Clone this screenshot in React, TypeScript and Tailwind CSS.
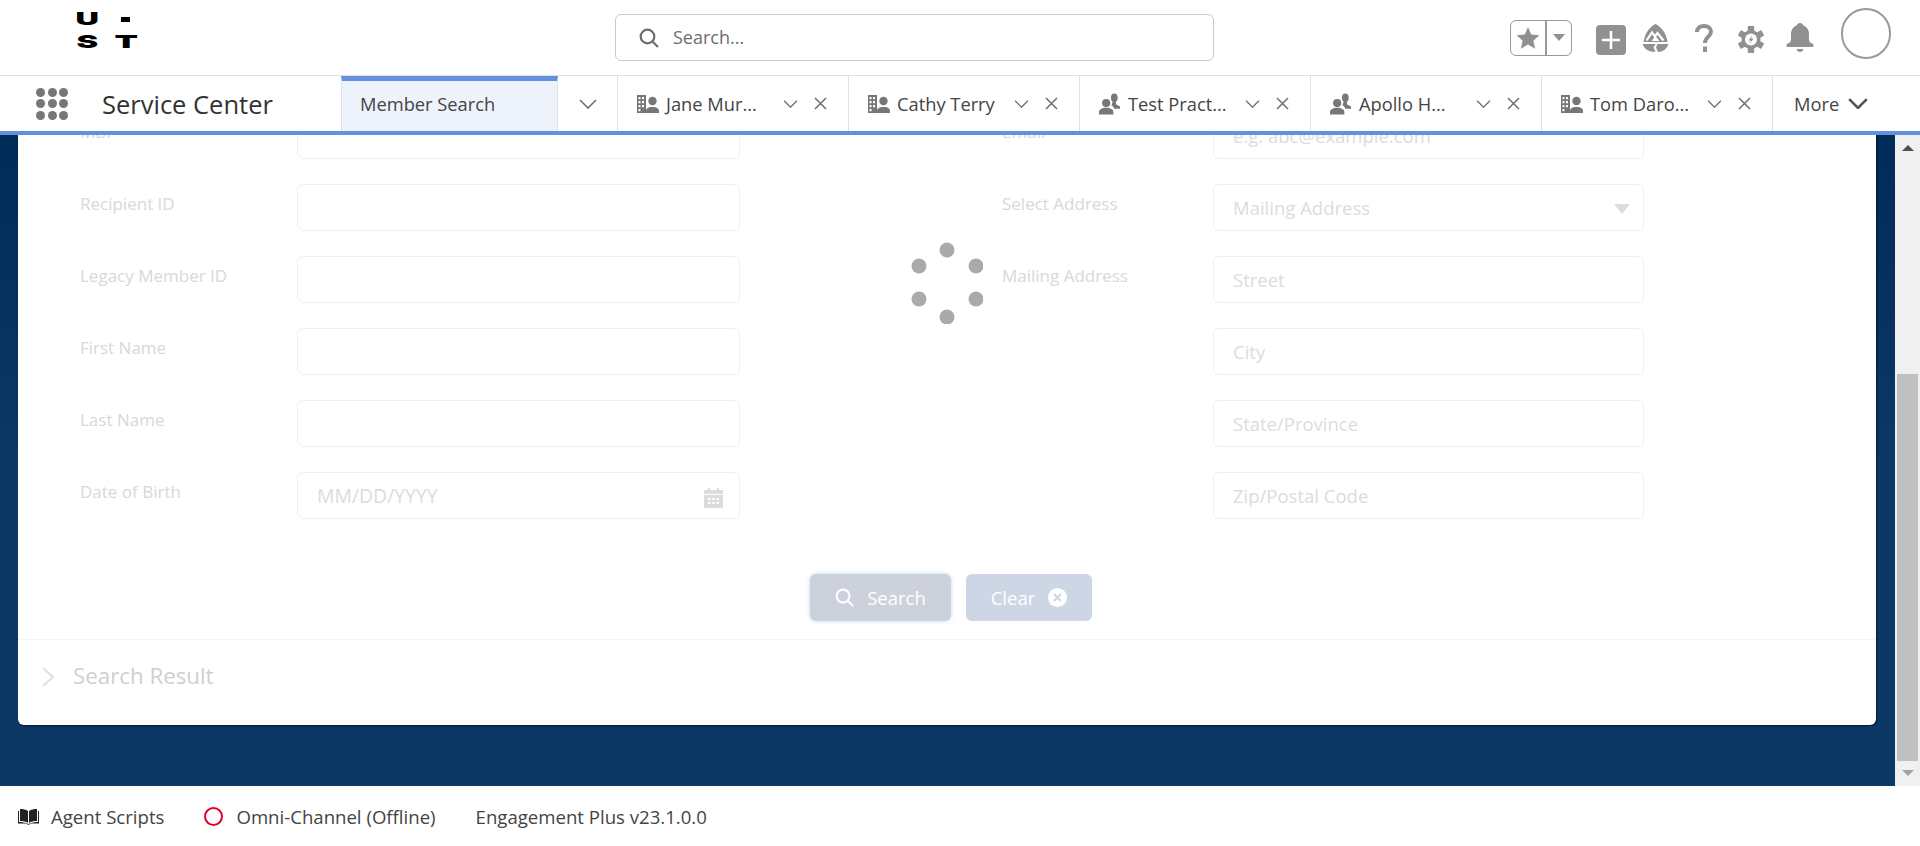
import React from "react";

const leftFields = ["MBI", "Recipient ID", "Legacy Member ID", "First Name", "Last Name", "Date of Birth"];
const rightFields = [
  { label: "Email", value: "e.g. abc@example.com" },
  { label: "Select Address", value: "Mailing Address" },
  { label: "Mailing Address", value: "Street" },
  { label: "", value: "City" },
  { label: "", value: "State/Province" },
  { label: "", value: "Zip/Postal Code" },
];
const tabs = [
  { name: "Jane Mur...", icon: "account" },
  { name: "Cathy Terry", icon: "account" },
  { name: "Test Pract...", icon: "contact" },
  { name: "Apollo H...", icon: "contact" },
  { name: "Tom Daro...", icon: "account" },
];

function Chevron({ className }: { className: string }) {
  return (
    <svg viewBox="0 0 18 10" fill="none" stroke="currentColor" strokeWidth="1.6" className={className}>
      <path d="M1 1l8 8 8-8" />
    </svg>
  );
}

function AccountIcon() {
  return (
    <svg viewBox="0 0 22 18" className="w-[22px] h-[18px] text-[#777]" fill="currentColor">
      <path
        fillRule="evenodd"
        d="M0 0h9v18H0zM1.5 2v2.2h2V2zM5 2v2.2h2V2zM1.5 6v2.2h2V6zM5 6v2.2h2V6zM1.5 10v2.2h2V10zM5 10v2.2h2V10zM1.5 14v2.2h2V14z"
      />
      <circle cx="15.5" cy="6" r="4.2" />
      <path d="M9 18v-2.4c0-2.2 2.6-3 4.2-3.6h4.6c1.6.6 4.2 1.4 4.2 3.6V18z" />
    </svg>
  );
}

function ContactIcon() {
  return (
    <svg viewBox="0 0 23 22" className="w-[23px] h-[22px] text-[#777]" fill="currentColor">
      <ellipse cx="16" cy="4.500" rx="3.500" ry="4.500" />
      <path d="M14.500 8h3l.5 3.500 4 2V16h-6c-.5-2-2-3-3-3.600z" />
      <circle cx="7.500" cy="10" r="4.300" />
      <path d="M0 22v-3c0-2 2.600-3 5-4h5c2.400 1 5 2 5 4v3z" />
    </svg>
  );
}

function SearchIcon({ className }: { className: string }) {
  return (
    <svg viewBox="0 0 20 20" fill="none" stroke="currentColor" strokeWidth="2.200" className={className}>
      <circle cx="8.500" cy="8.500" r="6.800" />
      <path d="M13.500 13.500l5.500 5.500" />
    </svg>
  );
}

function Gear() {
  const teeth = [0, 60, 120, 180, 240, 300];
  return (
    <svg viewBox="0 0 26 27" className="w-[26px] h-[27px] ml-[25px] mt-[3px] text-[#919191]" fill="currentColor">
      <g transform="translate(13 13.500)">
        {teeth.map((a) => (
          <rect key={a} x="-3.200" y="-13.500" width="6.400" height="7" rx="1" transform={`rotate(${a})`} />
        ))}
        <circle r="9.500" />
        <circle r="6" fill="#fff" />
        <path d="M1.500-4.500L-2.500 1h2.500L-1.500 4.500 2.500-1H0z" />
      </g>
    </svg>
  );
}

function Header() {
  return (
    <header className="h-[76px] shrink-0 flex items-center bg-white border-b border-[#e0e0e0]">
      <div className="ml-[68px] w-[77px] grid grid-cols-2 grid-rows-2 h-[46px] -mt-[14px] font-['Inter',sans-serif] font-black text-[18px] leading-none text-black">
        <span className="flex items-center justify-center scale-x-[1.8]">U</span>
        <span className="flex items-center justify-center">
          <span className="w-[9px] h-[5px] bg-black" />
        </span>
        <span className="flex items-center justify-center scale-x-[1.8]">S</span>
        <span className="flex items-center justify-center scale-x-[1.9]">T</span>
      </div>

      <div className="ml-[470px] w-[599px] h-[47px] flex items-center border border-[#c9c9c9] rounded-md pl-[23px]">
        <SearchIcon className="w-[20px] h-[20px] text-[#706e6b]" />
        <span className="ml-[14px] text-[18px] text-[#706e6b]">Search...</span>
      </div>

      <div className="ml-[296px] w-[62px] h-[36px] flex items-center border border-[#999] rounded-md">
        <div className="w-[36px] h-full flex items-center justify-center border-r-2 border-[#999]">
          <svg viewBox="0 0 24 24" className="w-[24px] h-[24px] text-[#919191]" fill="currentColor">
            <path d="M12 1l3.300 7.600 8.200.7-6.200 5.400 1.900 8L12 18.500l-7.200 4.200 1.900-8L.5 9.300l8.200-.7z" />
          </svg>
        </div>
        <div className="flex-1 flex items-center justify-center">
          <span className="w-0 h-0 border-x-[6.500px] border-x-transparent border-t-[7px] border-t-[#919191]" />
        </div>
      </div>
      <div className="ml-[24px] mt-[4px] w-[30px] h-[30px] rounded bg-[#919191] flex items-center justify-center">
        <svg viewBox="0 0 18 18" className="w-[18px] h-[18px]" stroke="#fff" strokeWidth="2.600">
          <path d="M9 0v18M0 9h18" />
        </svg>
      </div>
      <svg viewBox="0 0 27 28" className="ml-[16px] w-[27px] h-[28px] text-[#919191]" fill="currentColor">
        <path d="M13.500 0C8.500 2.500 3 8 1.500 18h24C24 8 18.500 2.500 13.500 0z" />
        <path d="M.5 20h13l-2 3.500 2 4.500C7 28 2 25 .5 20zM15.500 20h11c-1.500 5-6 8-10.500 8l-2-4.500z" />
        <path d="M4.500 16.500l5.500-8 3 4 2.500-3.500 6 7.500" fill="none" stroke="#fff" strokeWidth="2.200" />
        <path d="M9.500 17l4-5 4 5z" fill="#fff" />
      </svg>
      <svg viewBox="0 0 18 28" className="ml-[26px] w-[18px] h-[28px] text-[#919191]" fill="none" stroke="currentColor" strokeWidth="4">
        <path d="M2 8C2 4 5 2 9 2s7 2.200 7 5.500c0 5-6 5.400-6 11.500" />
        <path d="M10 22.500V28" />
      </svg>
      <Gear />
      <svg viewBox="0 0 28 29" className="ml-[22px] w-[28px] h-[29px] text-[#919191]" fill="currentColor">
        <path d="M14 0c2 0 3 1 3.300 2.500C21 3.800 23 7 23 11v6c0 2 2 3 4 4 1 .5 1 3-.5 3h-25C0 24 0 21.500 1 21c2-1 4-2 4-4v-6c0-4 2-7.200 5.700-8.500C11 1 12 0 14 0z" />
        <path d="M10.500 26h7c-.5 2-2 3-3.500 3s-3-1-3.500-3z" />
      </svg>
      <div className="ml-[27px] -mt-[8px] w-[50px] h-[51px] rounded-full border-2 border-[#999]" />
    </header>
  );
}

function TabBar() {
  return (
    <nav className="h-[59px] shrink-0 flex bg-white border-b-4 border-[#6391dd] text-[18.3px] text-[#444]">
      <div className="ml-[36px] my-auto grid grid-cols-3 gap-[2.500px]">
        {Array.from({ length: 9 }).map((_, i) => (
          <span key={i} className="w-[9px] h-[9px] rounded-full bg-[#777]" />
        ))}
      </div>
      <div className="ml-[34px] w-[239px] my-auto pt-[1px] text-[25.5px] text-[#333]">Service Center</div>
      <div className="w-[217px] flex items-center pl-[18px] pb-[5px] bg-[#eef2fb] border-x border-[#dde0e8] border-t-[5px] border-t-[#6391dd]">
        Member Search
      </div>
      <div className="w-[60px] flex items-center pl-[21px] border-r border-[#e0e0e0]">
        <Chevron className="w-[18px] h-[10px] text-[#706e6b]" />
      </div>
      {tabs.map((t) => (
        <div key={t.name} className="w-[231px] flex items-center pl-[19px] border-r border-[#e0e0e0]">
          <span className="w-[22px] flex justify-center">{t.icon === "account" ? <AccountIcon /> : <ContactIcon />}</span>
          <span className="ml-[7px] w-[117px] whitespace-nowrap">{t.name}</span>
          <Chevron className="w-[15px] h-[8px] text-[#706e6b]" />
          <svg viewBox="0 0 13 13" stroke="#706e6b" strokeWidth="1.500" className="ml-[16px] w-[13px] h-[13px]">
            <path d="M1 1l11 11M12 1L1 12" />
          </svg>
        </div>
      ))}
      <div className="flex items-center pl-[21px]">
        More
        <Chevron className="ml-[9px] w-[20px] h-[11px] text-[#555] stroke-[2.4]" />
      </div>
    </nav>
  );
}

function Field({ value, narrow, big }: { value?: string; narrow?: boolean; big?: boolean }) {
  return (
    <div
      className={`h-[47px] flex items-center px-[19px] pt-[1px] border border-[#efefef] rounded-md text-[#dcdcdc] ${
        narrow ? "w-[431px]" : "w-[443px]"
      } ${big ? "text-[19.4px]" : "text-[18.5px]"}`}
    >
      <span className="flex-1 whitespace-nowrap">{value}</span>
    </div>
  );
}

function SearchForm() {
  return (
    <div className="ml-[18px] -mt-[80px] w-[1858px] bg-white rounded-md shadow-[1px_1px_2px_rgba(0,0,0,0.55)]">
      <div className="pt-[57px] pl-[62px] flex">
        <div className="flex flex-col gap-[25px]">
          {leftFields.map((f) => (
            <div key={f} className="flex">
              <div className="w-[217px] pt-[6px] text-[17px] leading-[28px] text-[#d8d8d8]">{f}</div>
              {f === "Date of Birth" ? (
                <div className="relative">
                  <Field value="MM/DD/YYYY" big />
                  <svg viewBox="0 0 19 20" className="absolute right-[17px] top-[16px] w-[19px] h-[20px]" fill="#dcdcdc">
                    <path d="M4 0h2v2h7V0h2v2h4v4H0V2h4z" />
                    <path fillRule="evenodd" d="M0 7h19v13H0zM4 10v2h2.500v-2zM8.200 10v2h2.500v-2zM12.500 10v2H15v-2zM4 14v2h2.500v-2zM8.200 14v2h2.500v-2zM12.500 14v2H15v-2z" />
                  </svg>
                </div>
              ) : (
                <Field />
              )}
            </div>
          ))}
        </div>
        <div className="ml-[262px] flex flex-col gap-[25px]">
          {rightFields.map((f) => (
            <div key={f.value} className="flex">
              <div className="w-[211px] pt-[6px] text-[17px] leading-[28px] text-[#d8d8d8]">{f.label}</div>
              <div className="relative">
                <Field value={f.value} narrow />
                {f.value === "Mailing Address" && (
                  <span className="absolute right-[14px] top-[20px] w-0 h-0 border-x-[8px] border-x-transparent border-t-[10px] border-t-[#dcdcdc]" />
                )}
              </div>
            </div>
          ))}
        </div>
      </div>

      <div className="mt-[55px] mb-[18px] pl-[8px] flex justify-center gap-[15px] text-[18.5px] text-white">
        <button className="w-[141px] h-[47px] flex items-center justify-center gap-[13px] rounded-md bg-[#cdd1dc] shadow-[0_0_4px_#bcd8f8]">
          <SearchIcon className="w-[19px] h-[19px]" />
          Search
        </button>
        <button className="w-[126px] h-[47px] flex items-center justify-center gap-[13px] rounded-md bg-[#cdd6e5]">
          Clear
          <svg viewBox="0 0 19 19" className="w-[19px] h-[19px]">
            <circle cx="9.500" cy="9.500" r="9.500" fill="#fff" />
            <path d="M6 6l7 7M13 6l-7 7" stroke="#cdd6e5" strokeWidth="2" />
          </svg>
        </button>
      </div>

      <div className="h-[86px] flex items-center pl-[24px] pb-[13px] border-t border-[#f5f5f5] text-[22.3px] text-[#cfcfcf]">
        <svg viewBox="0 0 13 20" fill="none" stroke="#dfdfdf" strokeWidth="2" className="w-[13px] h-[20px] mt-[2px]">
          <path d="M1 1l10 9-10 9" />
        </svg>
        <span className="ml-[18px]">Search Result</span>
      </div>
    </div>
  );
}

function Scrollbar() {
  return (
    <div className="w-[25px] shrink-0 flex flex-col items-center bg-[#f0f0f0]">
      <span className="mt-[10px] w-0 h-0 border-x-[6px] border-x-transparent border-b-[6px] border-b-[#505050]" />
      <div className="flex-1" />
      <div className="w-[21px] h-[387px] bg-[#c0c0c0]" />
      <div className="h-[25px] pt-[9px]">
        <span className="block w-0 h-0 border-x-[6px] border-x-transparent border-t-[6px] border-t-[#a3a3a3]" />
      </div>
    </div>
  );
}

export default function App() {
  return (
    <div className="h-[846px] flex flex-col overflow-hidden bg-white font-['Open_Sans',sans-serif] text-[17px]">
      <Header />
      <TabBar />
      <main className="flex-1 min-h-0 flex">
        <div className="relative flex-1 overflow-hidden bg-[linear-gradient(#012b59,#0c3866_50%)]">
          <SearchForm />
          <svg viewBox="0 0 72 82" className="absolute left-[911px] top-[107px] w-[72px] h-[82px]" fill="#aaa">
            <circle cx="36" cy="8" r="7.500" />
            <circle cx="8" cy="24" r="7.500" />
            <circle cx="65" cy="24" r="7.500" />
            <circle cx="8" cy="57" r="7.500" />
            <circle cx="65" cy="57" r="7.500" />
            <circle cx="36" cy="75" r="7.500" />
          </svg>
        </div>
        <Scrollbar />
      </main>
      <footer className="h-[60px] shrink-0 flex items-center pl-[18px] pt-[1px] text-[18.6px] text-[#444]">
        <svg viewBox="0 0 21 16" className="w-[21px] h-[16px]" fill="#222">
          <path d="M2 0c3 0 6 .5 8 2v12c-2-1.500-5-2-8-2zM19 0c-3 0-6 .5-8 2v12c2-1.500 5-2 8-2z" />
          <path d="M0 2h1v11c3 0 6 .5 9.500 2 3.500-1.500 6.500-2 9.500-2V2h1v12.500h-8l-2.500 1.500-2.500-1.500H0z" />
        </svg>
        <span className="ml-[12px]">Agent Scripts</span>
        <span className="ml-[40px] w-[19px] h-[19px] rounded-full border-2 border-[#e4002b]" />
        <span className="ml-[13px]">Omni-Channel (Offline)</span>
        <span className="ml-[40px]">Engagement Plus v23.1.0.0</span>
      </footer>
    </div>
  );
}
